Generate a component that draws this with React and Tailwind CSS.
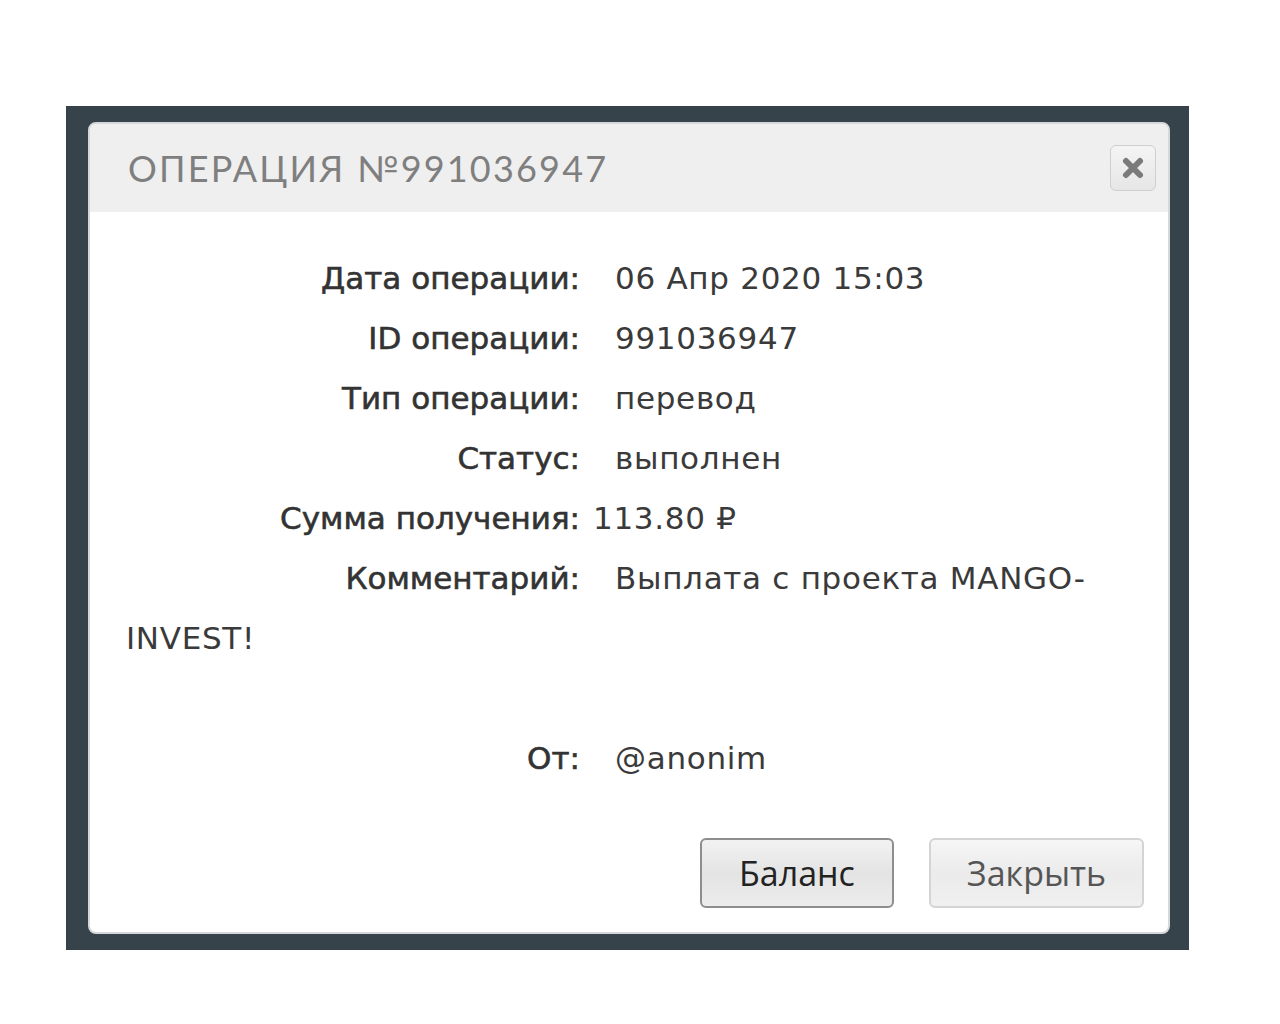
import { useState } from 'react';

const rows = [
  { label: 'Дата операции:', value: '06 Апр 2020 15:03' },
  { label: 'ID операции:', value: '991036947' },
  { label: 'Тип операции:', value: 'перевод' },
  { label: 'Статус:', value: 'выполнен' },
  { label: 'Сумма получения:', value: '113.80 ₽', tight: true },
];

function CloseIcon() {
  return (
    <svg width="26" height="26" viewBox="0 0 26 26">
      <path d="M6 6 L20 20 M20 6 L6 20" stroke="#7a7a7a" strokeWidth="6" strokeLinecap="round" />
    </svg>
  );
}

function Label({ children }) {
  return (
    <span className="inline-block w-[454px] text-right tracking-normal text-[#333] [-webkit-text-stroke:0.6px_#333]">
      {children}
    </span>
  );
}

function Row({ label, value, tight }) {
  return (
    <div className="leading-[60px] whitespace-nowrap">
      <Label>{label}</Label>
      <span className={tight ? 'ml-[13px]' : 'ml-[35px]'}>{value}</span>
    </div>
  );
}

export default function App() {
  const [open, setOpen] = useState(true);

  return (
    <div className="min-h-screen bg-white pt-[106px] pl-[66px]">
      <div className="w-[1123px] h-[844px] bg-[#37434b] pl-[22px] pt-[16px]">
        {open && (
          <div className="w-[1082px] h-[812px] bg-white rounded-[8px] border-2 border-[#d5d8da] overflow-hidden flex flex-col">
            <div className="h-[88px] bg-[#efefef] flex items-center justify-between pl-[38px] pr-[12px]">
              <h2
                className="text-[36px] tracking-[2.2px] text-[#7f7f7f] uppercase"
                style={{ fontFamily: 'Lato, "Noto Sans", sans-serif' }}
              >
                Операция №991036947
              </h2>
              <button
                onClick={() => setOpen(false)}
                className="w-[46px] h-[46px] rounded-[6px] border border-[#cfcfcf] bg-gradient-to-b from-[#f4f4f4] to-[#e6e6e6] flex items-center justify-center"
              >
                <CloseIcon />
              </button>
            </div>

            <div
              className="flex-1 flex flex-col pl-[36px] pt-[36px] text-[31px] tracking-[0.7px] text-[#3a3a3a]"
              style={{ fontFamily: '"DejaVu Sans", "Noto Sans", sans-serif' }}
            >
              {rows.map((r) => (
                <Row key={r.label} {...r} />
              ))}
              <div className="leading-[60px] whitespace-nowrap">
                <Label>Комментарий:</Label>
                <span className="ml-[35px]">Выплата с проекта MANGO-</span>
                <br />
                INVEST!
              </div>
              <div className="h-[60px]" />
              <Row label="От:" value="@anonim" />

              <div className="mt-auto mb-[24px] mr-[24px] flex justify-end gap-[35px] tracking-normal">
                <button
                  className="w-[194px] h-[70px] rounded-[6px] border-2 border-[#8e8e8e] bg-gradient-to-b from-[#f2f2f2] via-[#e4e4e4] to-[#ececec] text-[34px] text-[#222]"
                  style={{ fontFamily: '"Open Sans", "Noto Sans", sans-serif' }}
                >
                  Баланс
                </button>
                <button
                  onClick={() => setOpen(false)}
                  className="w-[215px] h-[70px] rounded-[6px] border-2 border-[#d4d4d4] bg-gradient-to-b from-[#f6f6f6] via-[#ebebeb] to-[#f0f0f0] text-[34px] text-[#555]"
                  style={{ fontFamily: '"Open Sans", "Noto Sans", sans-serif' }}
                >
                  Закрыть
                </button>
              </div>
            </div>
          </div>
        )}
      </div>
    </div>
  );
}
